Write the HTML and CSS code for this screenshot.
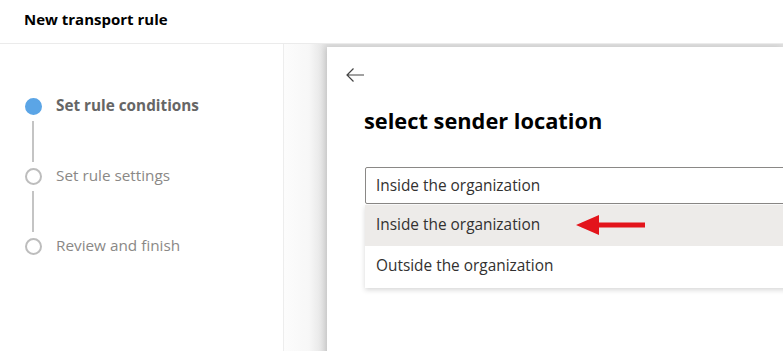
FILE: index.html
```html
<!DOCTYPE html>
<html>
<head>
<meta charset="utf-8">
<link rel="stylesheet" href="styles.css">
</head>
<body>
<header class="top">New transport rule</header>
<div class="main">
  <nav class="steps">
    <div class="step active">
      <div class="marker"><span class="dot"></span><span class="line"></span></div>
      <span class="label">Set rule conditions</span>
    </div>
    <div class="step">
      <div class="marker"><span class="dot"></span><span class="line"></span></div>
      <span class="label">Set rule settings</span>
    </div>
    <div class="step last">
      <div class="marker"><span class="dot"></span></div>
      <span class="label">Review and finish</span>
    </div>
  </nav>
  <section class="stage">
    <div class="panel">
      <svg class="back" width="20" height="16" viewBox="0 0 20 16"><path d="M19 8H2M8.5 1.5L2 8l6.5 6.5" fill="none" stroke="#444" stroke-width="1.2"/></svg>
      <h1 class="title">select sender location</h1>
      <div class="combo">
        <div class="field">Inside the organization</div>
        <div class="list">
          <div class="opt sel">Inside the organization
            <svg class="redarrow" width="72" height="22" viewBox="0 0 72 22"><path d="M0 11L23 1V8.5H69V13.5H23V21Z" fill="#e3141b"/></svg>
          </div>
          <div class="opt">Outside the organization</div>
        </div>
      </div>
    </div>
  </section>
</div>
</body>
</html>
```
FILE: styles.css
```css
html, body { margin: 0; padding: 0; }
body {
  width: 783px; height: 351px; overflow: hidden; background: #fff;
  font-family: "Open Sans", "Noto Sans", sans-serif; color: #201f1e;
}
.top {
  height: 44px; box-sizing: border-box; border-bottom: 1px solid #ebebeb;
  padding: 9px 0 0 24px; font-weight: 700; font-size: 15px; color: #000;
}
.main { display: flex; height: 307px; }
.steps {
  width: 284px; flex: none; box-sizing: border-box; border-right: 1px solid #ededed;
  padding: 54px 0 0 24px;
}
.step { display: flex; height: 70px; }
.marker { width: 18px; display: flex; flex-direction: column; align-items: center; }
.dot {
  width: 17px; height: 17px; box-sizing: border-box; border-radius: 50%;
  border: 2px solid #bdbdbd; background: #fff; flex: none;
}
.step.active .dot { background: #5ba5e6; border-color: #5ba5e6; }
.line { width: 2px; height: 41px; background: #c4c4c4; margin-top: 6px; }
.label {
  margin-left: 14px; font-size: 15.3px; color: #8a8886; line-height: 17px;
  margin-top: -1px;
}
.step.active .label { font-weight: 700; color: #666; }
.stage {
  flex: 1; background: linear-gradient(to right, #fcfcfc 0px, #f7f7f7 25px, #e0e0e0 43px);
  padding: 3px 0 0 43px; overflow: hidden;
}
.panel {
  background: #fff; height: 100%; padding: 20px 0 0 18px;
  box-shadow: -2px 0 6px rgba(0,0,0,0.12);
}
.back { display: block; }
.title {
  margin: 24px 0 0 19px; font-size: 21.8px; font-weight: 700; color: #000;
  line-height: 28px;
}
.combo { margin: 32px 0 0 20px; width: 520px; }
.field {
  height: 37px; box-sizing: border-box; border: 1px solid #8a8886; border-radius: 2px;
  padding: 0 0 0 10px; font-size: 15.4px; line-height: 35px; color: #323130;
}
.list {
  margin-top: 1px; background: #fff;
  box-shadow: 0 2px 5px rgba(0,0,0,0.16);
}
.opt {
  height: 42px; padding-left: 11px; font-size: 15.4px; line-height: 40px; color: #323130;
  position: relative;
}
.opt.sel { background: #edebe9; height: 41px; }
.redarrow { position: absolute; left: 211px; top: 9px; }
```
